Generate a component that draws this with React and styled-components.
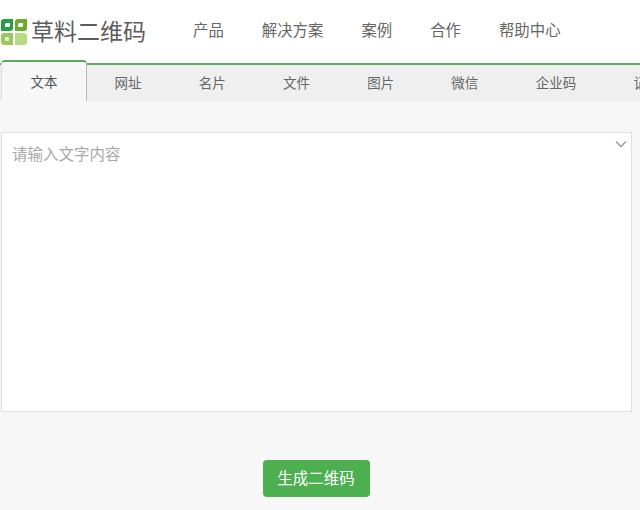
import React from "react";
import styled, { createGlobalStyle } from "styled-components";

const GlobalStyle = createGlobalStyle`
  html, body {
    margin: 0;
    padding: 0;
    background: #f7f7f7;
  }
  body {
    font-family: "Liberation Sans", "Noto Sans CJK SC", sans-serif;
  }
`;

const navItems = ["产品", "解决方案", "案例", "合作", "帮助中心"];
const tabs = ["文本", "网址", "名片", "文件", "图片", "微信", "企业码", "记录"];

const Page = styled.div`
  width: 640px;
  height: 510px;
  overflow: hidden;
  display: flex;
  flex-direction: column;
`;

const Header = styled.header`
  height: 63px;
  background: #fff;
  display: flex;
  align-items: center;
  flex-shrink: 0;
`;

const Logo = styled.div`
  width: 193px;
  display: flex;
  align-items: center;
  gap: 4px;
  padding-left: 1px;
  box-sizing: border-box;
`;

const LogoText = styled.span`
  font-size: 23px;
  color: #5c5c5c;
  line-height: 26px;
`;

const Nav = styled.nav`
  display: flex;
  gap: 38px;
  padding-bottom: 2px;
`;

const NavLink = styled.a`
  font-size: 15.4px;
  color: #666;
  line-height: 20px;
`;

const TabBar = styled.div`
  height: 38px;
  box-sizing: border-box;
  flex-shrink: 0;
  display: flex;
  background: #efefef;
  border-top: 2px solid #5cab5f;
  padding-left: 1px;
`;

const Tab = styled.div`
  flex-shrink: 0;
  box-sizing: border-box;
  width: ${(p) => (p.$wide ? 98 : 84.2)}px;
  font-size: 13.5px;
  line-height: 38px;
  text-align: center;
  color: #666;
`;

const ActiveTab = styled(Tab)`
  width: 86px;
  height: 41px;
  margin-top: -5px;
  margin-right: -1px;
  padding-top: 3px;
  line-height: 36px;
  background: #f7f7f7;
  border-top: 2px solid #5cab5f;
  border-left: 1px solid #ddd;
  border-right: 1px solid #bbb;
  border-radius: 4px 4px 0 0;
  color: #555;
`;

const Content = styled.main`
  flex: 1;
  display: flex;
  flex-direction: column;
  align-items: center;
  padding: 31px 8px 0 1px;
`;

const Editor = styled.div`
  position: relative;
  align-self: stretch;
  height: 280px;
  box-sizing: border-box;
  background: #fff;
  border: 1px solid #e0e0e0;
  padding: 11px 10px;
`;

const Placeholder = styled.div`
  font-size: 15.5px;
  line-height: 22px;
  color: #a9a9a9;
`;

const Toggle = styled.svg`
  position: absolute;
  top: 7px;
  right: 4px;
  width: 12px;
  height: 8px;
`;

const Submit = styled.button`
  margin: 48px 0 0 -1px;
  width: 107px;
  height: 37px;
  border: none;
  border-radius: 4px;
  background: #4caf50;
  color: #fff;
  font-family: inherit;
  font-size: 15.5px;
  padding: 0 0 3px;
`;

const LogoMark = () => (
  <svg width="26" height="26" viewBox="0 0 26 26">
    <path d="M3 0h9v9a3 3 0 0 1-3 3H0V3a3 3 0 0 1 3-3z" fill="#2b9b48" />
    <path d="M14 3a3 3 0 0 1 3-3h9v9a3 3 0 0 1-3 3h-9z" fill="#6cab2e" />
    <path d="M3 14h9v12H3a3 3 0 0 1-3-3v-6a3 3 0 0 1 3-3z" fill="#9ac85c" />
    <path d="M14 14h9a3 3 0 0 1 3 3v6a3 3 0 0 1-3 3h-9z" fill="#b7da82" />
    <path d="M5.5 4H9v2.5A1.5 1.5 0 0 1 7.500 8H4V5.500A1.500 1.500 0 0 1 5.500 4z" fill="#fff" />
    <path d="M18.500 4H22v2.500A1.500 1.500 0 0 1 20.500 8H17V5.500A1.500 1.500 0 0 1 18.500 4z" fill="#fff" />
    <rect x="4" y="18" width="4" height="4" rx="1" fill="#e6f2d4" />
  </svg>
);

const App = () => {
  return (
    <Page>
      <GlobalStyle />
      <Header>
        <Logo>
          <LogoMark />
          <LogoText>草料二维码</LogoText>
        </Logo>
        <Nav>
          {navItems.map((item) => (
            <NavLink key={item}>{item}</NavLink>
          ))}
        </Nav>
      </Header>
      <TabBar>
        {tabs.map((tab, i) =>
          i === 0 ? (
            <ActiveTab key={tab}>{tab}</ActiveTab>
          ) : (
            <Tab key={tab} $wide={tab.length > 2}>
              {tab}
            </Tab>
          )
        )}
      </TabBar>
      <Content>
        <Editor>
          <Placeholder>请输入文字内容</Placeholder>
          <Toggle viewBox="0 0 12 8">
            <path d="M1 1.5l5 5 5-5" fill="none" stroke="#999" strokeWidth="1.3" />
          </Toggle>
        </Editor>
        <Submit>生成二维码</Submit>
      </Content>
    </Page>
  );
};

export default App;
